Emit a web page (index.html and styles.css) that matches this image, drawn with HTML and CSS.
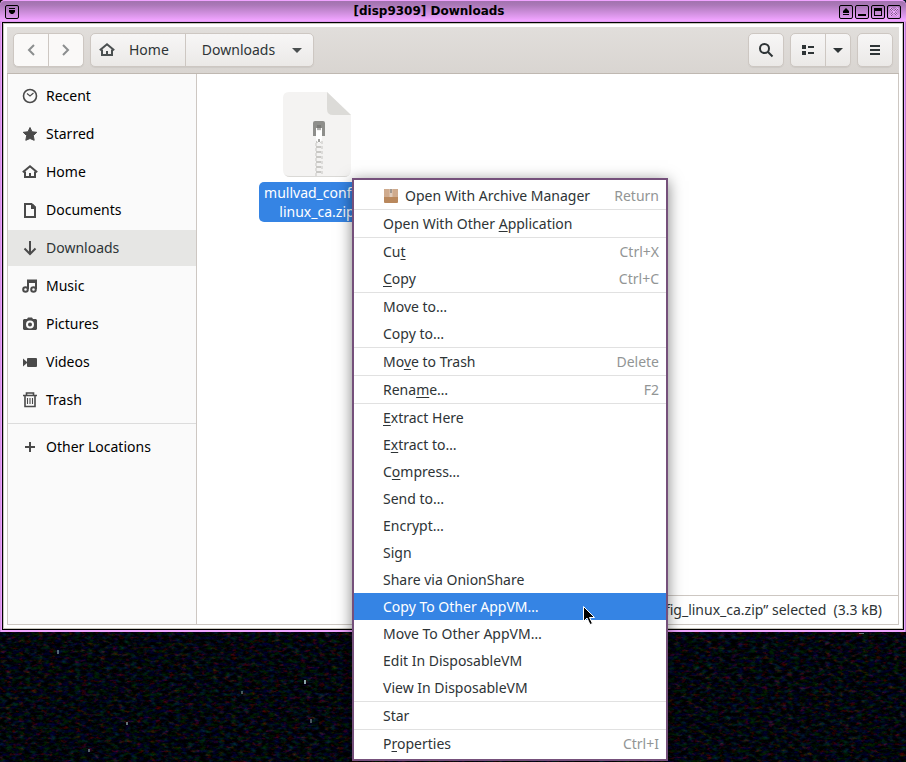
FILE: index.html
```html
<!DOCTYPE html>
<html lang="en">
<head>
  <meta charset="UTF-8">
  <meta name="viewport" content="width=device-width, initial-scale=1.0">
  <title>[disp9309] Downloads</title>
  <link rel="stylesheet" href="styles.css">
</head>
<body>
  <svg class="wallpaper" aria-hidden="true">
    <filter id="stars" x="0" y="0" width="100%" height="100%" color-interpolation-filters="sRGB">
      <feTurbulence type="fractalNoise" baseFrequency="0.16 0.3" numOctaves="3" seed="8"/>
      <feColorMatrix values="0.8 0 0 0 -0.45  0 0.4 0 0 -0.18  0 0 0.5 0 -0.2  0 0 0 0 1"/>
    </filter>
    <rect width="100%" height="100%" filter="url(#stars)"/>
    <g fill="#8aa5a8">
      <rect x="57" y="650" width="2" height="4" opacity=".6"/>
      <rect x="304" y="680" width="2" height="4"/>
      <rect x="126" y="722" width="2" height="3" opacity=".7"/>
      <rect x="241" y="691" width="2" height="3" opacity=".5"/>
      <rect x="88" y="749" width="2" height="3" opacity=".6"/>
      <rect x="310" y="719" width="2" height="4" opacity=".5"/>
      <rect x="859" y="633" width="5" height="1" opacity=".7"/>
    </g>
  </svg>

  <div class="window">
    <div class="titlebar">
      <button class="wm-btn" aria-label="Window menu">
        <svg width="14" height="14" viewBox="0 0 14 14"><path d="M4 3h6v1H4zM4 5h6v2L8 9H6L4 7z"/></svg>
      </button>
      <h1 class="title">[disp9309] Downloads</h1>
      <div class="wm-group">
        <button class="wm-btn" aria-label="Shade">
          <svg width="14" height="14" viewBox="0 0 14 14"><path d="M7 3l3 3v2H4V6zM4 9h6v1H4z"/></svg>
        </button>
        <button class="wm-btn" aria-label="Minimize">
          <svg width="14" height="14" viewBox="0 0 14 14"><path d="M3 9h8v2H3z"/></svg>
        </button>
        <button class="wm-btn" aria-label="Maximize">
          <svg width="14" height="14" viewBox="0 0 14 14"><path d="M3 3h8v8H3zM4 6v4h6V6z" fill-rule="evenodd"/></svg>
        </button>
        <button class="wm-btn wm-close" aria-label="Close">
          <svg width="14" height="14" viewBox="0 0 14 14"><path d="M3 3l8 8M11 3l-8 8" stroke="#f0aaff" stroke-width="3"/><path d="M3 4l3 3-3 3M11 4L8 7l3 3M4 3l3 3 3-3M4 11l3-3 3 3" fill="none" stroke="#000" stroke-width=".7" stroke-dasharray="1 1"/></svg>
        </button>
      </div>
    </div>

    <div class="frame">
      <div class="client">
        <header class="toolbar">
          <div class="group nav">
            <button aria-label="Back" disabled>
              <svg width="16" height="16" viewBox="0 0 16 16"><path d="M11 3L6 8l5 5" class="line"/></svg>
            </button>
            <button aria-label="Forward" disabled>
              <svg width="16" height="16" viewBox="0 0 16 16"><path d="M5 3l5 5-5 5" class="line"/></svg>
            </button>
          </div>
          <div class="group path">
            <button class="crumb-home">
              <svg width="16" height="16" viewBox="0 0 16 16"><use href="#home"/></svg>
              Home
            </button>
            <button class="crumb-current">
              Downloads
              <svg width="16" height="16" viewBox="0 0 16 16"><path d="M3 6h10L8 11z"/></svg>
            </button>
          </div>
          <div class="group search">
            <button aria-label="Search">
              <svg width="16" height="16" viewBox="0 0 16 16"><circle cx="6.500" cy="6.500" r="4.500" class="line"/><path d="M10 10l4.500 4.500" class="line"/></svg>
            </button>
          </div>
          <div class="group">
            <button aria-label="List view">
              <svg width="16" height="16" viewBox="0 0 16 16"><path d="M2 3h4v4H2zM8 4h6v2H8zM2 9h4v4H2zM8 10h6v2H8z"/></svg>
            </button>
            <button class="narrow" aria-label="View options">
              <svg width="16" height="16" viewBox="0 0 16 16"><path d="M3 6h10L8 11z"/></svg>
            </button>
          </div>
          <div class="group">
            <button aria-label="Menu">
              <svg width="16" height="16" viewBox="0 0 16 16"><path d="M3 3h10v2H3zM3 7h10v2H3zM3 11h10v2H3z"/></svg>
            </button>
          </div>
        </header>

        <div class="content">
          <nav class="sidebar">
            <a href="#"><svg width="16" height="16" viewBox="0 0 16 16"><circle cx="8" cy="8" r="6.500" class="line thin"/><path d="M5 5.500l3 2.500 3.500-3" class="line hair"/></svg>Recent</a>
            <a href="#"><svg width="16" height="16" viewBox="0 0 16 16"><path d="M8 1.500l2 4.300 4.800.5-3.500 3.300.9 4.700L8 12.500l-4.200 1.800.9-4.700L1.200 6.300 6 5.800z" stroke="currentColor" stroke-linejoin="round"/></svg>Starred</a>
            <a href="#"><svg width="16" height="16" viewBox="0 0 16 16">
              <g id="home"><path d="M.8 8.300L8 2.300l7.200 6" class="line"/><path d="M2 7.500h2V12h3V9h2v3h3V7.500h2V14H2z"/></g>
            </svg>Home</a>
            <a href="#"><svg width="16" height="16" viewBox="0 0 16 16"><path d="M3 2h6.500L13 5.500V15H3z" class="line"/><path d="M9 2v5h5V5l-3-3z"/></svg>Documents</a>
            <a href="#" class="active"><svg width="16" height="16" viewBox="0 0 16 16"><path d="M8 1v12M2.500 8.500L8 14l5.500-5.500" class="line"/></svg>Downloads</a>
            <a href="#"><svg width="16" height="16" viewBox="0 0 16 16"><circle cx="3.500" cy="11.500" r="2.300" class="line"/><circle cx="11.500" cy="11.500" r="2.300" class="line"/><path d="M6 11V2.500h8V11" class="line"/><path d="M6 2h8v3H6z"/></svg>Music</a>
            <a href="#"><svg width="16" height="16" viewBox="0 0 16 16"><path d="M5 3l1-1.500h4L11 3h3l1 1v9l-1 1H2l-1-1V4l1-1zM8 4.500a4 4 0 100 8 4 4 0 000-8zM8 6.500a2 2 0 110 4 2 2 0 010-4z" fill-rule="evenodd"/></svg>Pictures</a>
            <a href="#"><svg width="16" height="16" viewBox="0 0 16 16"><rect x="5" y="4" width="10" height="9" rx="1"/><path d="M1 4.500L5 8v1l-4 3.500z"/></svg>Videos</a>
            <a href="#"><svg width="16" height="16" viewBox="0 0 16 16"><path d="M1 3.500h14M4.500 3V1h7v2M3 4v10.500h10V4" class="line thin"/><path d="M5.500 6v6M8 6v6M10.500 6v6" class="line hair"/></svg>Trash</a>
            <hr>
            <a href="#"><svg width="16" height="16" viewBox="0 0 16 16"><path d="M7 3h2v4h4v2H9v4H7V9H3V7h4z"/></svg>Other Locations</a>
          </nav>

          <main class="files">
            <div class="file">
              <svg width="68" height="86" viewBox="0 0 68 86">
                <path d="M6 1h38l23 22v56q0 6-6 6H7q-6 0-6-6V7q0-6 5-6z" fill="#dad9d6"/>
                <path d="M6 0h38l24 23v55q0 6-6 6H7q-7 0-7-6V6q0-6 6-6z" fill="#f4f3f2"/>
                <path d="M44 0l24 23H50q-6 0-6-6z" fill="#dcdbd8"/>
                <path d="M36 49v35" stroke="#c9c8c5" stroke-width="6" stroke-dasharray="2 3"/>
                <path d="M33 51v33M39 49v35" stroke="#dddcda" stroke-width="2" stroke-dasharray="3 2"/>
                <path d="M32 29h8q2 0 2 2v13h-3v-8h-6v8h-3V31q0-2 2-2z" fill="#8e8e8b"/>
                <path d="M35 33v5M37 33v5" stroke="#686866"/>
                <path d="M33 36h1v3h4v-3h1v10q-1 5-3 5t-3-5z" fill="#fff"/>
                <path d="M35 47h2v3h-2z" fill="#a5a4a1"/>
              </svg>
              <span class="file-name">mullvad_config_<br>linux_ca.zip</span>
            </div>
            <div class="status">“mullvad_config_linux_ca.zip” selected&nbsp; (3.3 kB)</div>
          </main>
        </div>
      </div>
    </div>
  </div>

  <div class="menu" role="menu">
    <button role="menuitem">
      <svg class="box" width="16" height="16" viewBox="0 0 16 16"><rect x="1" y="1" width="14" height="14" rx="1" fill="#b9885d"/><path d="M1 9V2q0-1 1-1h12q1 0 1 1v7z" fill="#cfab8e"/><path d="M6.500 1h3v8h-3z" fill="#dfcbbb"/><path d="M7.500 1h1v4h-1z" fill="#666"/></svg>
      <span>Open With Archive Manager</span><kbd>Return</kbd>
    </button>
    <hr>
    <button role="menuitem"><span>Open With Other <u>A</u>pplication</span></button>
    <hr>
    <button role="menuitem"><span>Cu<u>t</u></span><kbd>Ctrl+X</kbd></button>
    <button role="menuitem"><span><u>C</u>opy</span><kbd>Ctrl+C</kbd></button>
    <hr>
    <button role="menuitem"><span>Move to…</span></button>
    <button role="menuitem"><span>Copy to…</span></button>
    <hr>
    <button role="menuitem"><span>Mo<u>v</u>e to Trash</span><kbd>Delete</kbd></button>
    <hr>
    <button role="menuitem"><span>Rena<u>m</u>e…</span><kbd>F2</kbd></button>
    <hr>
    <button role="menuitem"><span><u>E</u>xtract Here</span></button>
    <button role="menuitem"><span>E<u>x</u>tract to…</span></button>
    <button role="menuitem"><span>C<u>o</u>mpress…</span></button>
    <button role="menuitem"><span>Send to…</span></button>
    <button role="menuitem"><span>Encrypt…</span></button>
    <button role="menuitem"><span>Sign</span></button>
    <button role="menuitem"><span>Share via OnionShare</span></button>
    <button role="menuitem" class="hover"><span>Copy To Other AppVM…</span></button>
    <button role="menuitem"><span>Move To Other AppVM…</span></button>
    <button role="menuitem"><span>Edit In DisposableVM</span></button>
    <button role="menuitem"><span>View In DisposableVM</span></button>
    <hr>
    <button role="menuitem"><span>Star</span></button>
    <hr>
    <button role="menuitem"><span>P<u>r</u>operties</span><kbd>Ctrl+I</kbd></button>
  </div>

  <svg class="pointer" width="12" height="19" viewBox="0 0 12 19" aria-hidden="true">
    <path d="M.5.5v15l3.500-3.500 3 6.500 2.500-1-3-6h5z" fill="#000" stroke="#fff"/>
  </svg>
</body>
</html>
```

FILE: styles.css
```css
* {
  box-sizing: border-box;
}
body {
  margin: 0;
  height: 100vh;
  overflow: hidden;
  background: #020308;
  color: #2e3436;
  font-family: 'Noto Sans', sans-serif;
  font-size: 14px;
  line-height: 19px;
}
button {
  margin: 0;
  padding: 0;
  border: none;
  background: none;
  color: inherit;
  font: inherit;
}
svg {
  display: block;
  flex: none;
  fill: currentColor;
}
.line {
  fill: none;
  stroke: currentColor;
  stroke-width: 2;
}
.line.thin {
  stroke-width: 1.6;
}
.line.hair {
  stroke-width: 1.1;
}
.wallpaper {
  position: absolute;
  z-index: -1;
  width: 100%;
  height: 100%;
}

/* window manager frame */
.window {
  display: flex;
  flex-direction: column;
  height: calc(100vh - 130px);
  padding: 0 2px 2px;
  border-radius: 5px 5px 0 0;
  background: linear-gradient(to right, #d592e4 1px, #f0a4ff 1px, #f0a4ff calc(100% - 1px), #c080cf calc(100% - 1px));
}
.titlebar {
  display: flex;
  align-items: center;
  height: 22px;
  margin: 0 -2px;
  padding: 0 5px;
  border-top: 1px solid #f0a4ff;
  border-radius: 5px 5px 0 0;
  background: linear-gradient(#a374b0 1px, #ab78b8 4px, #f0a4ff 19px, #f0a4ff 20px, #d08de0);
}
.title {
  flex: 1;
  margin: 0;
  padding-bottom: 2px;
  color: #000;
  font: bold 12px/18px 'DejaVu Sans', sans-serif;
  text-align: center;
}
.wm-group {
  display: flex;
  gap: 2px;
}
.wm-btn {
  width: 14px;
  height: 14px;
  border: 1px solid #000;
  border-radius: 2px;
  background: linear-gradient(#a976b7, #dc97ea);
  color: #000;
}
.wm-btn svg {
  margin: -1px;
}
.frame {
  flex: 1;
  display: flex;
  min-height: 0;
  padding: 3px;
  border: 1px solid #c9c6bd;
  outline: 1px solid #000;
  margin: 1px;
  background: #fff;
}
.client {
  flex: 1;
  display: flex;
  flex-direction: column;
  min-width: 0;
  border: 1px solid #cdc7c2;
  border-top: none;
}

.toolbar {
  display: flex;
  align-items: center;
  gap: 6px;
  height: 47px;
  margin: 0 -1px;
  padding: 0 6px;
  border-bottom: 1px solid #bfb8b1;
  background: linear-gradient(#e1dedb, #d9d5d1);
  line-height: 18px;
}
.group {
  display: flex;
  height: 34px;
  border: 1px solid #cdc7c2;
  border-radius: 5px;
  background: linear-gradient(#f7f6f6, #ebe9e7);
  box-shadow: 0 1px 1px rgba(0,0,0,0.06);
}
.group button {
  display: flex;
  align-items: center;
  justify-content: center;
  width: 34px;
}
.group button + button {
  border-left: 1px solid #cdc7c2;
}
.group .narrow {
  width: 25px;
}
.nav {
  background: #faf9f8;
  color: #8b8e8f;
}
.nav button + button {
  width: 35px;
}
.path button {
  width: auto;
}
.path svg {
  color: #4a4f50;
}
.path .crumb-home {
  gap: 14px;
  padding: 0 16px 0 8px;
}
.path .crumb-current {
  gap: 14px;
  padding: 0 8px 0 16px;
}
.search {
  margin-left: auto;
}

.content {
  flex: 1;
  display: flex;
  min-height: 0;
}
.sidebar {
  display: flex;
  flex-direction: column;
  gap: 2px;
  width: 189px;
  padding-top: 4px;
  border-right: 1px solid #cdc7c2;
  background: #fafafa;
  line-height: 18px;
}
.sidebar a {
  display: flex;
  align-items: center;
  gap: 8px;
  height: 36px;
  padding-left: 14px;
  color: #000;
  text-decoration: none;
}
.sidebar a svg {
  color: #4a4a4a;
}
.sidebar .active {
  background: #e6e6e4;
  color: #2e3436;
}
.sidebar hr {
  width: 100%;
  height: 1px;
  margin: 3px 0;
  border: none;
  background: #dcdcdc;
}
.files {
  flex: 1;
  position: relative;
  min-width: 0;
  padding: 18px 60px;
  background: #fff;
}
.file {
  display: flex;
  flex-direction: column;
  align-items: center;
  gap: 4px;
  width: 120px;
}
.file-name {
  padding: 1px 5px;
  border-radius: 5px;
  background: #3584e4;
  color: #fff;
  text-align: center;
}
.status {
  position: absolute;
  right: 0;
  bottom: 0;
  padding: 4px 16px 5px 10px;
  border-top: 1px solid #cdc7c2;
  border-left: 1px solid #cdc7c2;
  background: #fff;
  white-space: nowrap;
}

.menu {
  position: absolute;
  top: 178px;
  left: 352px;
  display: flex;
  flex-direction: column;
  width: 316px;
  padding: 2px 0;
  border: 2px solid #75507b;
  background: #fff;
  box-shadow: 0 3px 14px rgba(0,0,0,0.5);
}
.menu button {
  display: flex;
  align-items: center;
  height: 27px;
  padding: 0 7px 0 29px;
  text-align: left;
}
.menu hr {
  width: 100%;
  height: 1px;
  margin: 0;
  border: none;
  background: #e1e1e1;
}
.menu .box {
  margin-right: 6px;
}
.menu kbd {
  margin-left: auto;
  color: #929595;
  font: inherit;
}
.menu u {
  text-underline-offset: 2px;
}
.menu .hover {
  background: #3584e4;
  color: #fff;
}
.pointer {
  position: absolute;
  top: 606px;
  left: 583px;
}
```
